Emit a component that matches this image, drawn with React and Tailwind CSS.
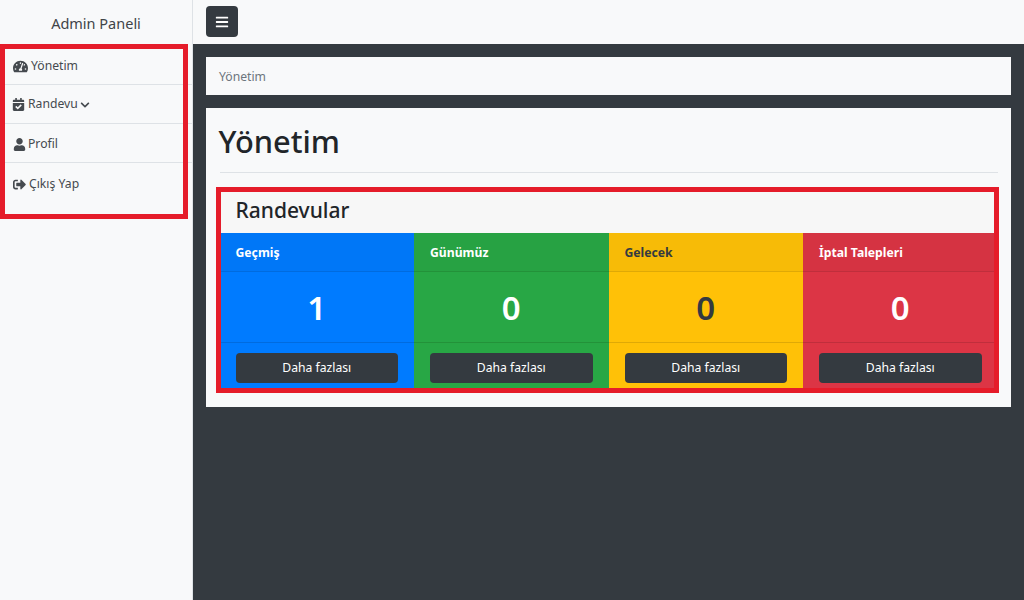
import { FaTachometerAlt, FaCalendarCheck, FaChevronDown, FaUser, FaSignOutAlt, FaBars } from "react-icons/fa";

const font = "font-['Noto_Sans','Open_Sans',sans-serif]";

function NavRow({ icon, label, after, className }) {
  return (
    <a className={`flex items-center text-[12.2px] text-[#454a4f] pl-[13px] border-b border-[#dee2e6] ${className}`}>
      {icon}
      <span>{label}</span>
      {after}
    </a>
  );
}

function Stat({ bg, head, line, dark, title, value }) {
  const text = dark ? "text-[#343a40]" : "text-white";
  return (
    <div className={`flex-1 flex flex-col ${bg} ${text}`}>
      <div className={`h-[39px] flex items-center px-4 pt-[3px] text-[12.2px] font-bold border-b ${head} ${line}`}>{title}</div>
      <div className="h-[70px] flex items-center justify-center text-[33px] font-semibold leading-none">{value}</div>
      <div className={`flex-1 px-4 pt-[10px] border-t ${line}`}>
        <button className="w-full h-[30px] rounded-[4px] bg-[#343a40] text-white text-[12.2px] flex items-center justify-center">Daha fazlası</button>
      </div>
    </div>
  );
}

export default function App() {
  return (
    <div className={`flex w-[1024px] h-[600px] overflow-hidden bg-[#343a40] ${font}`}>
      <aside className="relative w-[193px] shrink-0 bg-[#f8f9fa] border-r border-[#dee2e6]">
        <div className="h-[45px] flex items-center justify-center text-[14.5px] text-[#3f4448] pt-[3px]">Admin Paneli</div>
        <nav className="flex flex-col">
          <NavRow className="h-[40px] pt-[3px]" icon={<FaTachometerAlt className="text-[15px] mr-[3px]" />} label="Yönetim" />
          <NavRow className="h-[39px] pt-[1px]" icon={<FaCalendarCheck className="text-[13px] -ml-[1px] mr-[3px]" />} label="Randevu" after={<FaChevronDown className="text-[10px] ml-[2px]" />} />
          <NavRow className="h-[39px] pt-[3px]" icon={<FaUser className="text-[13px] mr-[2px]" />} label="Profil" />
          <a className="flex items-center text-[12.2px] text-[#454a4f] pl-[13px] pt-[1px] h-[41px]">
            <FaSignOutAlt className="text-[13px] mr-[3px]" />
            <span>Çıkış Yap</span>
          </a>
        </nav>
        <div className="absolute left-0 top-[44px] w-[188px] h-[175px] border-[5px] border-[#e51c2a]" />
      </aside>
      <div className="flex-1 flex flex-col">
        <header className="h-[44px] bg-[#f8f9fa] flex items-start pl-[13px] pt-[6px]">
          <button className="w-[32px] h-[31px] rounded-[4px] bg-[#343a40] flex items-center justify-center text-white">
            <FaBars className="text-[14px]" />
          </button>
        </header>
        <main className="px-[13px] pt-[13px] flex flex-col gap-[13px]">
          <div className="h-[38px] bg-[#f8f9fa] flex items-center px-[13px] pt-[3px] text-[12.2px] text-[#6c757d]">Yönetim</div>
          <section className="relative h-[299px] bg-[#f8f9fa] px-[13.5px] flex flex-col">
            <h1 className="h-[65px] shrink-0 flex items-center text-[30.8px] font-medium text-[#212529] border-b border-[#dee2e6] pt-[2px] indent-[-1px]">Yönetim</h1>
            <div className="mt-[19px] h-[196px] flex flex-col">
              <div className="h-[41px] bg-[#f7f7f7] flex items-center px-4 pb-[3px] text-[21px] font-medium text-[#212529]">Randevular</div>
              <div className="flex-1 flex">
                <Stat bg="bg-[#007bff]" head="bg-[#0077f7]" line="border-[#006bdf]" title="Geçmiş" value="1" />
                <Stat bg="bg-[#28a745]" head="bg-[#27a243]" line="border-[#239239]" title="Günümüz" value="0" />
                <Stat bg="bg-[#ffc107]" head="bg-[#f7bb07]" line="border-[#dfa906]" dark title="Gelecek" value="0" />
                <Stat bg="bg-[#dc3545]" head="bg-[#d53342]" line="border-[#c02e3c]" title="İptal Talepleri" value="0" />
              </div>
            </div>
            <div className="absolute left-[10px] top-[79px] w-[783px] h-[206px] border-[5px] border-[#e51c2a]" />
          </section>
        </main>
      </div>
    </div>
  );
}
